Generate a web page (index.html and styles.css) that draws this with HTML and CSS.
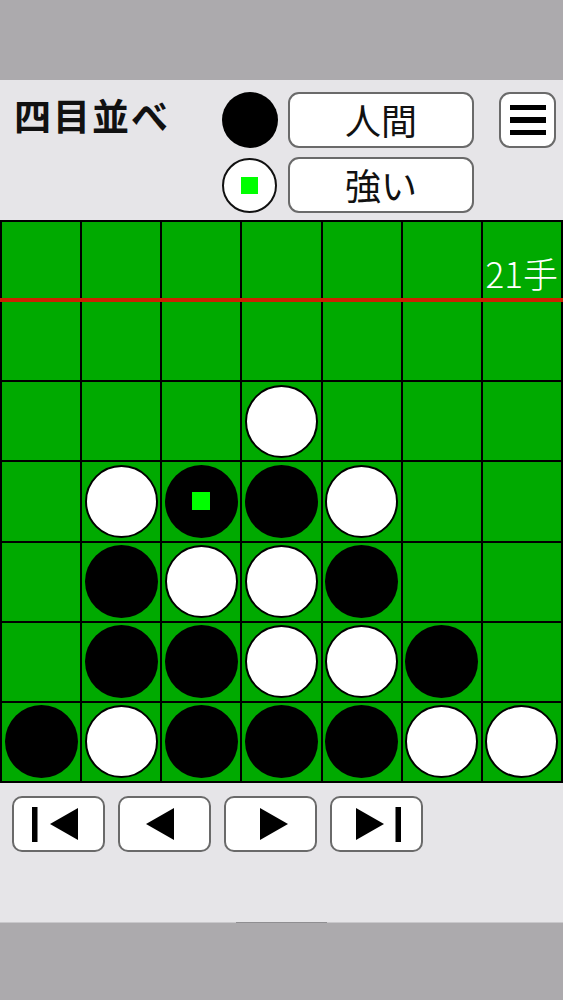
FILE: index.html
```html
<!DOCTYPE html>
<html lang="ja">
<head>
<meta charset="utf-8">
<title>四目並べ</title>
<link rel="stylesheet" href="styles.css">
</head>
<body>
<div class="topbar"></div>
<div class="app">
  <header class="header">
    <div class="title">四目並べ</div>
    <div class="stone stone-black"></div>
    <button class="btn btn-player">人間</button>
    <button class="btn btn-menu" aria-label="menu">
      <span class="bar"></span><span class="bar"></span><span class="bar"></span>
    </button>
    <div class="stone stone-white"><span class="mark"></span></div>
    <button class="btn btn-player">強い</button>
  </header>

  <div class="board">
    <div class="cell"></div><div class="cell"></div><div class="cell"></div><div class="cell"></div><div class="cell"></div><div class="cell"></div><div class="cell"></div>
    <div class="cell"></div><div class="cell"></div><div class="cell"></div><div class="cell"></div><div class="cell"></div><div class="cell"></div><div class="cell"></div>
    <div class="cell"></div><div class="cell"></div><div class="cell"></div><div class="cell"><div class="piece white"></div></div><div class="cell"></div><div class="cell"></div><div class="cell"></div>
    <div class="cell"></div><div class="cell"><div class="piece white"></div></div><div class="cell"><div class="piece black"><span class="mark"></span></div></div><div class="cell"><div class="piece black"></div></div><div class="cell"><div class="piece white"></div></div><div class="cell"></div><div class="cell"></div>
    <div class="cell"></div><div class="cell"><div class="piece black"></div></div><div class="cell"><div class="piece white"></div></div><div class="cell"><div class="piece white"></div></div><div class="cell"><div class="piece black"></div></div><div class="cell"></div><div class="cell"></div>
    <div class="cell"></div><div class="cell"><div class="piece black"></div></div><div class="cell"><div class="piece black"></div></div><div class="cell"><div class="piece white"></div></div><div class="cell"><div class="piece white"></div></div><div class="cell"><div class="piece black"></div></div><div class="cell"></div>
    <div class="cell"><div class="piece black"></div></div><div class="cell"><div class="piece white"></div></div><div class="cell"><div class="piece black"></div></div><div class="cell"><div class="piece black"></div></div><div class="cell"><div class="piece black"></div></div><div class="cell"><div class="piece white"></div></div><div class="cell"><div class="piece white"></div></div>
    <div class="redline"></div>
    <div class="moves">21手</div>
  </div>

  <nav class="controls">
    <button class="btn nav-btn" aria-label="first">
      <svg width="89" height="52" viewBox="2 2 89 52"><rect x="20" y="11" width="5.5" height="35" fill="#000"/><polygon points="38,28 66,12 66,44" fill="#000"/></svg>
    </button>
    <button class="btn nav-btn" aria-label="prev">
      <svg width="89" height="52" viewBox="2 2 89 52"><polygon points="28,28 56,12 56,44" fill="#000"/></svg>
    </button>
    <button class="btn nav-btn" aria-label="next">
      <svg width="89" height="52" viewBox="2 2 89 52"><polygon points="64,28 36,12 36,44" fill="#000"/></svg>
    </button>
    <button class="btn nav-btn" aria-label="last">
      <svg width="89" height="52" viewBox="2 2 89 52"><polygon points="54,28 26,12 26,44" fill="#000"/><rect x="65.5" y="11" width="5.5" height="35" fill="#000"/></svg>
    </button>
  </nav>
</div>
<div class="bottombar"><div class="indicator"></div></div>
</body>
</html>
```

FILE: styles.css
```css
* { box-sizing: border-box; }
html, body {
  margin: 0;
  padding: 0;
}
body {
  width: 563px;
  height: 1000px;
  overflow: hidden;
  font-family: "Noto Sans CJK JP", "Noto Sans", sans-serif;
  background: #acaaad;
}
.topbar {
  height: 80px;
  background: #acaaad;
}
.app {
  height: 842px;
  background: #e6e5e8;
}
.header {
  height: 140px;
  display: grid;
  grid-template-columns: 1fr 56px 196px 82px;
  grid-template-rows: 56px 56px;
  row-gap: 9px;
  padding: 12px 7px 0 14px;
  align-items: center;
}
.title {
  font-size: 37px;
  font-weight: 700;
  line-height: 1;
  color: #111;
  align-self: start;
  margin-top: 5px;
  letter-spacing: 2px;
}
.stone {
  width: 56px;
  height: 56px;
  border-radius: 50%;
  display: flex;
  align-items: center;
  justify-content: center;
}
.stone-black { background: #000; }
.stone-white {
  grid-column: 2;
  background: #fff;
  border: 2.5px solid #111;
  width: 55px;
  height: 55px;
}
.stone-white .mark {
  width: 17px;
  height: 17px;
  background: #00ff00;
}
.btn {
  background: #fff;
  border: 2px solid #6a6a6a;
  border-radius: 11px;
  padding: 0;
  margin: 0;
  font-family: "Noto Sans CJK JP", "Noto Sans", sans-serif;
  color: #111;
}
.btn-player {
  grid-column: 3;
  justify-self: end;
  width: 186px;
  height: 56px;
  font-size: 36px;
  line-height: 1;
  font-weight: 400;
  display: flex;
  align-items: center;
  justify-content: center;
  padding-bottom: 2px;
}
.btn-menu {
  justify-self: end;
  width: 57px;
  height: 56px;
  display: flex;
  flex-direction: column;
  align-items: center;
  justify-content: center;
  gap: 7px;
}
.btn-menu .bar {
  display: block;
  width: 36px;
  height: 5.5px;
  background: #000;
}

.board {
  position: relative;
  width: 563px;
  height: 563px;
  background: #000;
  display: grid;
  grid-template-columns: repeat(7, 1fr);
  grid-template-rows: repeat(7, 1fr);
  gap: 2px;
  padding: 2px;
}
.cell {
  background: #00aa00;
  display: flex;
  align-items: center;
  justify-content: center;
}
.piece {
  width: 73px;
  height: 73px;
  border-radius: 50%;
  display: flex;
  align-items: center;
  justify-content: center;
}
.piece.black { background: #000; }
.piece.white {
  background: #fff;
  border: 2px solid #000;
}
.piece .mark {
  width: 18px;
  height: 18px;
  background: #00ff00;
}
.redline {
  position: absolute;
  left: 0;
  right: 0;
  top: 78px;
  height: 4px;
  background: #cc2200;
}
.moves {
  position: absolute;
  right: 5px;
  top: 35px;
  color: #fff;
  font-size: 35px;
  line-height: 1;
  font-weight: 300;
}

.controls {
  display: flex;
  gap: 13px;
  padding: 13px 0 0 12px;
}
.nav-btn {
  width: 93px;
  height: 56px;
  display: flex;
  align-items: center;
  justify-content: center;
  border-radius: 10px;
}
.nav-btn svg { display: block; }

.bottombar {
  height: 78px;
  background: #acaaad;
  border-top: 1px solid #c9c8cb;
}
.indicator {
  width: 91px;
  height: 1px;
  margin-left: 236px;
  margin-top: -1px;
  background: #8f8e91;
}
```
